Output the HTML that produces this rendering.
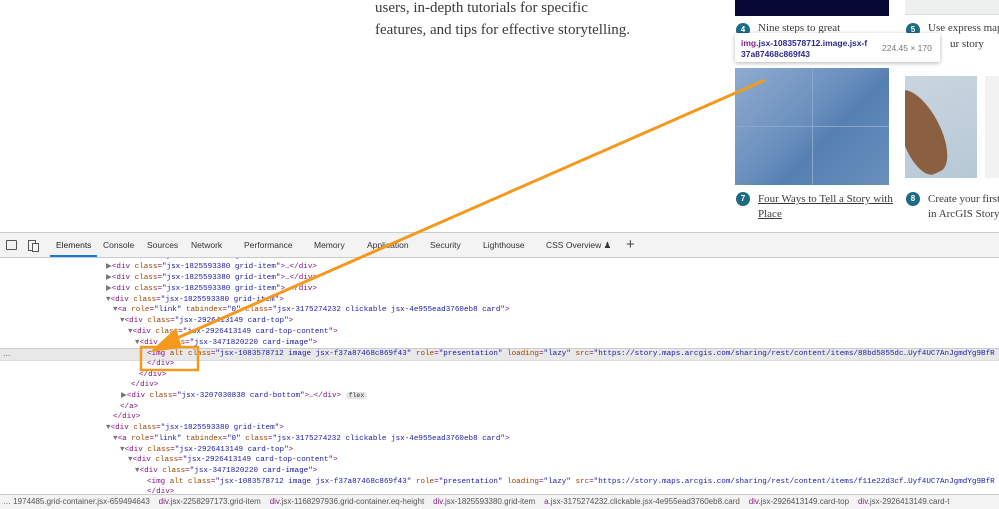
<!DOCTYPE html>
<html><head><meta charset="utf-8"><style>
body{margin:0;width:999px;height:508px;overflow:hidden;background:#fff;position:relative;font-family:"Liberation Sans",sans-serif}
.a{position:absolute}
.serif{font-family:"Liberation Serif",serif;color:#3a3a3a}
.num{position:absolute;width:14px;height:14px;border-radius:50%;background:#1d6a84;color:#fff;font:bold 8px "Liberation Sans";text-align:center;line-height:14px}
.c{position:absolute;font:7.6px "Liberation Mono",monospace;color:#881280;white-space:nowrap;line-height:10px}
.at{color:#994500}.v{color:#1a1aa6}.p{color:#777}
.tab{position:absolute;top:240px;font-size:8.5px;color:#333}
</style></head><body>
<div class="a serif" style="left:375px;top:-3px;font-size:15px;line-height:22px">users, in-depth tutorials for specific<br>features, and tips for effective storytelling.</div>
<div class="a" style="left:735px;top:0;width:154px;height:16px;background:#040833"></div>
<div class="a" style="left:905px;top:0;width:94px;height:14px;background:#eef0f0;border-bottom:1px solid #ddd"></div>
<div class="num" style="left:736px;top:23px">4</div>
<div class="a serif" style="left:758px;top:22px;font-size:11px">Nine steps to great</div>
<div class="num" style="left:906px;top:23px">5</div>
<div class="a serif" style="left:928px;top:22px;font-size:11px;white-space:nowrap">Use express map</div>
<div class="a serif" style="left:950px;top:38px;font-size:11px">ur story</div>
<div class="a" style="left:735px;top:33px;width:205px;height:29px;background:#fff;box-shadow:0 1px 4px rgba(0,0,0,.3);border-radius:2px"></div>
<div class="a" style="left:741px;top:38px;font-size:8.5px;font-weight:bold;color:#2a2a8a;line-height:11px"><span style="color:#882288">img</span>.jsx-1083578712.image.jsx-f<br>37a87468c869f43</div>
<div class="a" style="left:882px;top:43px;font-size:8.5px;color:#777">224.45 × 170</div>
<div class="a" style="left:735px;top:68px;width:154px;height:117px;background:linear-gradient(135deg,#8eaccf,#6a8fbd 45%,#5580b2 60%,#6a90bd)"></div>
<div class="a" style="left:812px;top:68px;width:1px;height:117px;background:#8aa8cc"></div>
<div class="a" style="left:735px;top:126px;width:154px;height:1px;background:#8aa8cc"></div>
<div class="a" style="left:905px;top:76px;width:72px;height:102px;background:linear-gradient(160deg,#c9d6e0,#b7c8d6);overflow:hidden"><div style="position:absolute;left:-5px;top:10px;width:40px;height:90px;background:#8a6040;border-radius:40% 60% 50% 40%;transform:rotate(-25deg)"></div></div>
<div class="a" style="left:985px;top:76px;width:14px;height:102px;background:#f2f2f2"></div>
<div class="num" style="left:736px;top:192px">7</div>
<div class="a serif" style="left:758px;top:192px;font-size:11px;line-height:15px;text-decoration:underline">Four Ways to Tell a Story with<br>Place</div>
<div class="num" style="left:906px;top:192px">8</div>
<div class="a serif" style="left:928px;top:192px;font-size:11px;line-height:15px;white-space:nowrap">Create your first<br>in ArcGIS StoryM</div>

<div class="a" style="left:0;top:232px;width:999px;height:276px;background:#fff;border-top:1px solid #ccc"></div>
<div class="a" style="left:0;top:348px;width:999px;height:11px;background:#e8e8e8;border-top:1px solid #ccc;border-bottom:1px solid #ddd"></div>
<div class="a" style="left:3px;top:348px;font-size:9px;color:#666">...</div>

<div class="c" style="left:106px;top:251px"><span class="p">▶</span>&lt;div <span class="at">class</span>=<span class="v">"jsx-1825593380 grid-item"</span>&gt;…&lt;/div&gt;</div>
<div class="c" style="left:106px;top:262px"><span class="p">▶</span>&lt;div <span class="at">class</span>=<span class="v">"jsx-1825593380 grid-item"</span>&gt;…&lt;/div&gt;</div>
<div class="c" style="left:106px;top:273px"><span class="p">▶</span>&lt;div <span class="at">class</span>=<span class="v">"jsx-1825593380 grid-item"</span>&gt;…&lt;/div&gt;</div>
<div class="c" style="left:106px;top:284px"><span class="p">▶</span>&lt;div <span class="at">class</span>=<span class="v">"jsx-1825593380 grid-item"</span>&gt;…&lt;/div&gt;</div>
<div class="c" style="left:106px;top:295px"><span class="p">▼</span>&lt;div <span class="at">class</span>=<span class="v">"jsx-1825593380 grid-item"</span>&gt;</div>
<div class="c" style="left:113px;top:305px"><span class="p">▼</span>&lt;a <span class="at">role</span>=<span class="v">"link"</span> <span class="at">tabindex</span>=<span class="v">"0"</span> <span class="at">class</span>=<span class="v">"jsx-3175274232 clickable jsx-4e955ead3760eb8 card"</span>&gt;</div>
<div class="c" style="left:120px;top:316px"><span class="p">▼</span>&lt;div <span class="at">class</span>=<span class="v">"jsx-2926413149 card-top"</span>&gt;</div>
<div class="c" style="left:128px;top:327px"><span class="p">▼</span>&lt;div <span class="at">class</span>=<span class="v">"jsx-2926413149 card-top-content"</span>&gt;</div>
<div class="c" style="left:135px;top:338px"><span class="p">▼</span>&lt;div <span class="at">class</span>=<span class="v">"jsx-3471820220 card-image"</span>&gt;</div>
<div class="c" style="left:147px;top:349px">&lt;img <span class="at">alt class</span>=<span class="v">"jsx-1083578712 image jsx-f37a87468c869f43"</span> <span class="at">role</span>=<span class="v">"presentation"</span> <span class="at">loading</span>=<span class="v">"lazy"</span> <span class="at">src</span>=<span class="v">"https://story.maps.arcgis.com/sharing/rest/content/items/88bd5855dc…Uyf4UC7AnJgmdYg9BfR</span></div>
<div class="c" style="left:147px;top:359px">&lt;/div&gt;</div>
<div class="c" style="left:139px;top:370px">&lt;/div&gt;</div>
<div class="c" style="left:131px;top:380px">&lt;/div&gt;</div>
<div class="c" style="left:121px;top:391px"><span class="p">▶</span>&lt;div <span class="at">class</span>=<span class="v">"jsx-3207030838 card-bottom"</span>&gt;…&lt;/div&gt; <span style="background:#e4e4e4;border-radius:6px;color:#333;font-size:6.5px;padding:0 3px">flex</span></div>
<div class="c" style="left:120px;top:402px">&lt;/a&gt;</div>
<div class="c" style="left:113px;top:412px">&lt;/div&gt;</div>
<div class="c" style="left:106px;top:423px"><span class="p">▼</span>&lt;div <span class="at">class</span>=<span class="v">"jsx-1825593380 grid-item"</span>&gt;</div>
<div class="c" style="left:113px;top:434px"><span class="p">▼</span>&lt;a <span class="at">role</span>=<span class="v">"link"</span> <span class="at">tabindex</span>=<span class="v">"0"</span> <span class="at">class</span>=<span class="v">"jsx-3175274232 clickable jsx-4e955ead3760eb8 card"</span>&gt;</div>
<div class="c" style="left:120px;top:445px"><span class="p">▼</span>&lt;div <span class="at">class</span>=<span class="v">"jsx-2926413149 card-top"</span>&gt;</div>
<div class="c" style="left:128px;top:455px"><span class="p">▼</span>&lt;div <span class="at">class</span>=<span class="v">"jsx-2926413149 card-top-content"</span>&gt;</div>
<div class="c" style="left:135px;top:466px"><span class="p">▼</span>&lt;div <span class="at">class</span>=<span class="v">"jsx-3471820220 card-image"</span>&gt;</div>
<div class="c" style="left:147px;top:477px">&lt;img <span class="at">alt class</span>=<span class="v">"jsx-1083578712 image jsx-f37a87468c869f43"</span> <span class="at">role</span>=<span class="v">"presentation"</span> <span class="at">loading</span>=<span class="v">"lazy"</span> <span class="at">src</span>=<span class="v">"https://story.maps.arcgis.com/sharing/rest/content/items/f11e22d3cf…Uyf4UC7AnJgmdYg9BfR</span></div>
<div class="c" style="left:147px;top:487px">&lt;/div&gt;</div>

<div class="a" style="left:0;top:233px;width:999px;height:24px;background:#f3f3f3;border-bottom:1px solid #ccc"></div>
<div class="a" style="left:6px;top:240px;width:9px;height:8px;border:1px solid #555;border-radius:1px"></div>
<div class="a" style="left:28px;top:240px;width:6px;height:9px;border:1px solid #555"></div><div class="a" style="left:32px;top:243px;width:5px;height:7px;border:1px solid #555;background:#f3f3f3"></div>
<div class="tab" style="left:56px;color:#222">Elements</div>
<div class="a" style="left:50px;top:255px;width:47px;height:2px;background:#1a73e8"></div>
<div class="tab" style="left:103px">Console</div>
<div class="tab" style="left:147px">Sources</div>
<div class="tab" style="left:191px">Network</div>
<div class="tab" style="left:244px">Performance</div>
<div class="tab" style="left:314px">Memory</div>
<div class="tab" style="left:367px">Application</div>
<div class="tab" style="left:430px">Security</div>
<div class="tab" style="left:483px">Lighthouse</div>
<div class="tab" style="left:546px">CSS Overview ♟</div>
<div class="a" style="left:626px;top:236px;font-size:15px;color:#444">+</div>

<div class="a" style="left:0;top:494px;width:999px;height:14px;background:#f3f3f3;border-top:1px solid #ccc"></div>
<div class="a" style="left:3px;top:497px;font-size:8px;color:#555;white-space:nowrap">… 1974485.grid-container.jsx-659494643 &nbsp;&nbsp; <span style="color:#882288">div</span>.jsx-2258297173.grid-item &nbsp;&nbsp; <span style="color:#882288">div</span>.jsx-1168297936.grid-container.eq-height &nbsp;&nbsp; <span style="color:#882288">div</span>.jsx-1825593380.grid-item &nbsp;&nbsp; <span style="color:#882288">a</span>.jsx-3175274232.clickable.jsx-4e955ead3760eb8.card &nbsp;&nbsp; <span style="color:#882288">div</span>.jsx-2926413149.card-top &nbsp;&nbsp; <span style="color:#882288">div</span>.jsx-2926413149.card-t</div>

<svg class="a" style="left:0;top:0" width="999" height="508">
<line x1="765" y1="80" x2="168" y2="342" stroke="#f39a1e" stroke-width="3"/>
<polygon points="150,352 176,328 182,348" fill="#f39a1e"/>
<rect x="141" y="347" width="57" height="23" fill="none" stroke="#f39a1e" stroke-width="2.5"/>
</svg>
</body></html>
